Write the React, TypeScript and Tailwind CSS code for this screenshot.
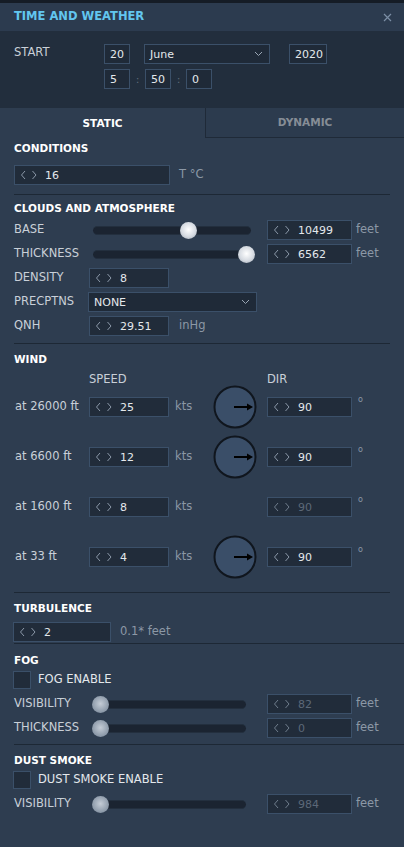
import type { ReactNode } from "react";

function Chevrons({ dim }: { dim?: boolean }) {
  const c = dim ? "#6f7c8c" : "#8b98a8";
  return (
    <svg width="19" height="10" viewBox="0 0 19 10" className="shrink-0">
      <path d="M5 1 L1.5 5 L5 9" fill="none" stroke={c} strokeWidth="1" />
      <path d="M12.5 1 L16 5 L12.5 9" fill="none" stroke={c} strokeWidth="1" />
    </svg>
  );
}

function SpinBox({ value, width, disabled }: { value: string; width: string; disabled?: boolean }) {
  return (
    <div
      className={`${width} h-[20px] flex items-center gap-[6px] pl-[5px] border border-[#3b5069] bg-[#212c3a] shrink-0`}
    >
      <Chevrons dim={disabled} />
      <span className={disabled ? "text-[#5c6878]" : "text-[#e4e8ec]"}>{value}</span>
    </div>
  );
}

function Box({ value, width }: { value: string; width: string }) {
  return (
    <div className={`${width} h-[20px] flex items-center pl-[5px] border border-[#3b5069] bg-[#1f2a38] text-[#e4e8ec] shrink-0`}>
      {value}
    </div>
  );
}

function Select({ value, width }: { value: string; width: string }) {
  return (
    <div
      className={`${width} h-[20px] flex items-center justify-between pl-[5px] pr-[6px] border border-[#3b5069] bg-[#1f2a38] text-[#e4e8ec] shrink-0`}
    >
      <span>{value}</span>
      <svg width="9" height="6" viewBox="0 0 9 6">
        <path d="M1 1 L4.5 4.5 L8 1" fill="none" stroke="#9aa6b4" strokeWidth="1" />
      </svg>
    </div>
  );
}

function Slider({ width, pos, disabled }: { width: string; pos: number; disabled?: boolean }) {
  return (
    <div className={`${width} relative h-[16px] flex items-center shrink-0`}>
      <div className="w-full h-[9px] rounded-full bg-[#1b2431] border-y border-[#232f3e]" />
      <div
        className={`absolute top-0 w-[17px] h-[17px] -ml-[8px] rounded-full ${
          disabled
            ? "bg-[radial-gradient(circle_at_50%_45%,#c4ccd6,#8593a3_75%,#6f7d8e)]"
            : "bg-[radial-gradient(circle_at_50%_45%,#ffffff,#d6dbe2_55%,#9aa3ae)]"
        }`}
        style={{ left: `${pos}%` }}
      />
    </div>
  );
}

function Dial() {
  return (
    <svg width="46" height="46" viewBox="0 0 46 46" className="shrink-0">
      <circle cx="23" cy="23" r="20.5" fill="#3a4e68" stroke="#10161e" strokeWidth="2" />
      <path d="M22 23 H38" stroke="#000" strokeWidth="2" />
      <path d="M35 19.5 L41 23 L35 26.5 Z" fill="#000" />
    </svg>
  );
}

function Heading({ children, className = "" }: { children: ReactNode; className?: string }) {
  return <div className={`h-[20px] flex items-center font-bold text-[10.5px] text-white ${className}`}>{children}</div>;
}

function Divider({ full }: { full?: boolean }) {
  return <div className={`h-px bg-[#1d2835] ${full ? "mr-[-14px]" : ""}`} />;
}

function Unit({ children, className = "" }: { children: ReactNode; className?: string }) {
  return <span className={`text-[#8c98a6] text-[11.5px] ${className}`}>{children}</span>;
}

function Label({ children, className = "" }: { children: ReactNode; className?: string }) {
  return <span className={`text-[#c9d0d8] text-[11.5px] shrink-0 ${className}`}>{children}</span>;
}

function Check() {
  return <div className="w-[18px] h-[18px] border border-[#3b5069] bg-[#212c3a] shrink-0" />;
}

function WindRow({ label, speed, dir, dial, dimDir }: { label: string; speed: string; dir: string; dial?: boolean; dimDir?: boolean }) {
  return (
    <div className="h-[50px] flex items-center">
      <Label className="w-[75px] pl-px">{label}</Label>
      <SpinBox value={speed} width="w-[80px]" />
      <Unit className="ml-[6px] w-[30px]">kts</Unit>
      <div className="w-[46px] ml-[7px] flex justify-center">{dial ? <Dial /> : null}</div>
      <div className="ml-[9px]">
        <SpinBox value={dir} width="w-[85px]" disabled={dimDir} />
      </div>
      <span className="ml-[6px] self-start mt-[14px] text-[8px] text-[#8c98a6]">o</span>
    </div>
  );
}

export default function App() {
  return (
    <div className="w-[404px] h-[847px] overflow-hidden bg-[#2e3d50] text-[11px] leading-none text-[#d5dbe2] font-['DejaVu_Sans',sans-serif]">
      <div className="h-[3px] bg-[#151c26]" />
      <div className="h-[28px] flex items-center justify-between pl-[14px] pr-[12px] bg-[#2c3b4f]">
        <span className="font-bold text-[11.5px] text-[#62c6ef]">TIME AND WEATHER</span>
        <svg width="9" height="9" viewBox="0 0 9 9">
          <path d="M1 1 L8 8 M8 1 L1 8" stroke="#7b8ea5" strokeWidth="1.2" />
        </svg>
      </div>

      <div className="h-[77px] bg-[#222e3d] pt-[13px] flex">
        <Label className="w-[104px] pl-[14px] pt-[3px]">START</Label>
        <div className="flex flex-col gap-[5px]">
          <div className="flex items-center">
            <Box value="20" width="w-[26px]" />
            <div className="ml-[14px]">
              <Select value="June" width="w-[126px]" />
            </div>
            <div className="ml-[19px]">
              <Box value="2020" width="w-[38px]" />
            </div>
          </div>
          <div className="flex items-center">
            <Box value="5" width="w-[26px]" />
            <span className="w-[15px] text-center text-[#5d6a7a]">:</span>
            <Box value="50" width="w-[26px]" />
            <span className="w-[15px] text-center text-[#5d6a7a]">:</span>
            <Box value="0" width="w-[26px]" />
          </div>
        </div>
      </div>

      <div className="h-[30px] flex bg-[#222e3d]">
        <div className="w-[205px] flex items-center justify-center font-bold text-[10.5px] text-white bg-[#2e3d50]">STATIC</div>
        <div className="flex-1 flex items-center justify-center font-bold text-[10.5px] text-[#868d96] bg-[#2c3b4e] border-l border-b border-[#1f2a38]">
          DYNAMIC
        </div>
      </div>

      <div className="px-[14px]">
        <Heading>CONDITIONS</Heading>
        <div className="mt-[7px] flex items-center">
          <SpinBox value="16" width="w-[156px]" />
          <Unit className="ml-[9px]">T °C</Unit>
        </div>
        <div className="mt-[9px]">
          <Divider />
        </div>

        <Heading className="mt-[3px]">CLOUDS AND ATMOSPHERE</Heading>
        <div className="h-[24px] flex items-center">
          <Label className="w-[79px]">BASE</Label>
          <Slider width="w-[158px]" pos={60} />
          <div className="ml-[16px]">
            <SpinBox value="10499" width="w-[85px]" />
          </div>
          <Unit className="ml-[4px]">feet</Unit>
        </div>
        <div className="h-[24px] flex items-center">
          <Label className="w-[79px]">THICKNESS</Label>
          <Slider width="w-[158px]" pos={97} />
          <div className="ml-[16px]">
            <SpinBox value="6562" width="w-[85px]" />
          </div>
          <Unit className="ml-[4px]">feet</Unit>
        </div>
        <div className="h-[24px] flex items-center">
          <Label className="w-[75px]">DENSITY</Label>
          <SpinBox value="8" width="w-[80px]" />
        </div>
        <div className="h-[24px] flex items-center">
          <Label className="w-[74px]">PRECPTNS</Label>
          <Select value="NONE" width="w-[169px]" />
        </div>
        <div className="h-[24px] flex items-center">
          <Label className="w-[75px]">QNH</Label>
          <SpinBox value="29.51" width="w-[80px]" />
          <Unit className="ml-[10px]">inHg</Unit>
        </div>
        <div className="mt-[5px]">
          <Divider />
        </div>

        <Heading className="mt-[5px]">WIND</Heading>
        <div className="h-[13px] pt-[5px] flex">
          <Label className="ml-[75px] w-[178px]">SPEED</Label>
          <Label>DIR</Label>
        </div>
        <WindRow label="at 26000 ft" speed="25" dir="90" dial />
        <WindRow label="at 6600 ft" speed="12" dir="90" dial />
        <WindRow label="at 1600 ft" speed="8" dir="90" dimDir />
        <WindRow label="at 33 ft" speed="4" dir="90" dial />
        <div className="mt-[10px]">
          <Divider />
        </div>

        <Heading className="mt-[5px]">TURBULENCE</Heading>
        <div className="h-[22px] mt-[3px] flex items-center ml-[-1px]">
          <SpinBox value="2" width="w-[98px]" />
          <Unit className="ml-[9px]">0.1* feet</Unit>
        </div>
        <Divider full />

        <Heading className="mt-[6px]">FOG</Heading>
        <div className="h-[20px] flex items-center ml-[-1px]">
          <Check />
          <span className="ml-[7px] text-[11.5px] text-[#e4e8ec]">FOG ENABLE</span>
        </div>
        <div className="h-[24px] mt-[2px] flex items-center">
          <Label className="w-[78px]">VISIBILITY</Label>
          <Slider width="w-[154px]" pos={5} disabled />
          <div className="ml-[21px]">
            <SpinBox value="82" width="w-[85px]" disabled />
          </div>
          <Unit className="ml-[4px]">feet</Unit>
        </div>
        <div className="h-[24px] flex items-center">
          <Label className="w-[78px]">THICKNESS</Label>
          <Slider width="w-[154px]" pos={5} disabled />
          <div className="ml-[21px]">
            <SpinBox value="0" width="w-[85px]" disabled />
          </div>
          <Unit className="ml-[4px]">feet</Unit>
        </div>
        <div className="mt-[4px]">
          <Divider full />
        </div>

        <Heading className="mt-[5px]">DUST SMOKE</Heading>
        <div className="h-[20px] flex items-center ml-[-1px]">
          <Check />
          <span className="ml-[7px] text-[11.5px] text-[#e4e8ec]">DUST SMOKE ENABLE</span>
        </div>
        <div className="h-[24px] mt-[2px] flex items-center">
          <Label className="w-[78px]">VISIBILITY</Label>
          <Slider width="w-[154px]" pos={5} disabled />
          <div className="ml-[21px]">
            <SpinBox value="984" width="w-[85px]" disabled />
          </div>
          <Unit className="ml-[4px]">feet</Unit>
        </div>
      </div>
    </div>
  );
}
